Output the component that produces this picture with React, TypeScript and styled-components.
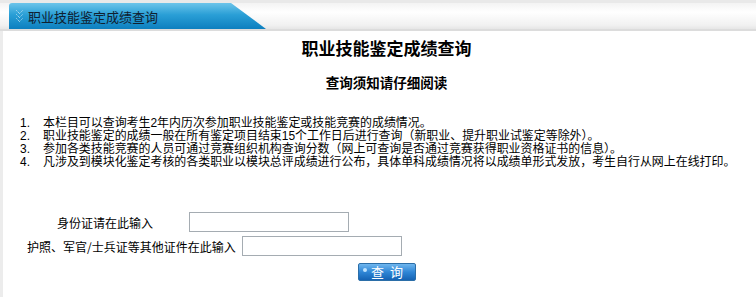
import React from 'react';
import styled, { createGlobalStyle } from 'styled-components';

const GlobalStyle = createGlobalStyle`
  html, body {
    margin: 0;
    padding: 0;
    background: #fff;
    font-family: "Liberation Sans", "Noto Sans CJK SC", sans-serif;
    font-size: 12px;
    color: #000;
  }
`;

const Page = styled.div`
  width: 756px;
  height: 297px;
  overflow: hidden;
  display: flex;
  flex-direction: column;
`;

const Header = styled.div`
  height: 26px;
  border-top: 3px solid #e9e9e9;
  border-bottom: 2px solid #dcdcdc;
  background: linear-gradient(#f3f3f3, #ffffff 35%, #f1f1f1 85%, #e6e6e6);
  display: flex;
  padding-left: 9px;
`;

const Tab = styled.div`
  width: 250px;
  height: 26px;
  background: linear-gradient(#6cc4ea, #2a9fd6 45%, #0d7fbf);
  clip-path: polygon(0 0, 222px 0, 100% 100%, 0 100%);
  border-top-left-radius: 3px;
  display: flex;
  align-items: center;
  gap: 5px;
  padding-left: 7px;
  font-family: "Noto Sans CJK SC", sans-serif;
  font-size: 13px;
  color: #102030;
`;

const Body = styled.div`
  flex: 1;
  border-left: 3px solid #ececec;
  display: flex;
  flex-direction: column;
`;

const Title = styled.h1`
  margin: 6px 0 0;
  text-align: center;
  padding-left: 14px;
  font-family: "Noto Sans CJK SC", sans-serif;
  font-size: 17px;
  font-weight: bold;
  line-height: 22px;
`;

const SubTitle = styled.h2`
  margin: 14px 0 0;
  text-align: center;
  padding-left: 14px;
  font-family: "Noto Sans CJK SC", sans-serif;
  font-size: 13.5px;
  font-weight: bold;
  line-height: 18px;
`;

const Notes = styled.ol`
  margin: 26px 0 0;
  padding: 0 0 0 17px;
  list-style: none;
`;

const Note = styled.li`
  display: flex;
  line-height: 13px;
  height: 13px;
  font-family: "Liberation Sans", "Noto Sans CJK SC", sans-serif;
  font-size: 11.95px;
  white-space: nowrap;
`;

const Num = styled.span`
  width: 23px;
  flex: none;
`;

const Form = styled.form`
  margin-top: 41px;
  display: flex;
  flex-direction: column;
`;

const Row = styled.div<{ $indent: number; $gap: number }>`
  display: flex;
  align-items: center;
  height: 24px;
  padding-left: ${p => p.$indent}px;
  gap: ${p => p.$gap}px;
  font-family: "Noto Sans CJK SC", sans-serif;
  font-size: 12px;
`;

const Input = styled.input`
  box-sizing: border-box;
  width: 160px;
  height: 20px;
  margin: 0;
  border: 1px solid #a5acb2;
  background: #fff;
`;

const Submit = styled.button`
  margin: 5px 0 0 355px;
  width: 58px;
  height: 18px;
  padding: 0 0 0 6px;
  border: 1px solid #2b6ea8;
  border-radius: 2px;
  background: linear-gradient(#6fb6ee, #2f86d6 50%, #1563b4);
  color: #fff;
  font-family: "Noto Sans CJK SC", sans-serif;
  font-size: 13px;
  letter-spacing: 6px;
  line-height: 16px;
  position: relative;
  &::before {
    content: "";
    position: absolute;
    left: 4px;
    top: 4px;
    width: 4px;
    height: 4px;
    border-radius: 50%;
    background: #bfe3ff;
  }
`;

const Chevrons = () => (
  <svg width="7" height="14" viewBox="0 0 7 14">
    <g fill="none" stroke="#e6f4fb" strokeWidth="1" strokeDasharray="1 1">
      <polyline points="0.5,1.5 3.5,4.5 6.5,1.5" />
      <polyline points="0.5,5.5 3.5,8.5 6.5,5.5" />
      <polyline points="0.5,9.5 3.5,12.5 6.5,9.5" />
    </g>
  </svg>
);

const notes = [
  '本栏目可以查询考生2年内历次参加职业技能鉴定或技能竞赛的成绩情况。',
  '职业技能鉴定的成绩一般在所有鉴定项目结束15个工作日后进行查询（新职业、提升职业试鉴定等除外）。',
  '参加各类技能竞赛的人员可通过竞赛组织机构查询分数（网上可查询是否通过竞赛获得职业资格证书的信息）。',
  '凡涉及到模块化鉴定考核的各类职业以模块总评成绩进行公布，具体单科成绩情况将以成绩单形式发放，考生自行从网上在线打印。',
];

const App: React.FC = () => {
  return (
    <>
      <GlobalStyle />
      <Page>
        <Header>
          <Tab>
            <Chevrons />
            职业技能鉴定成绩查询
          </Tab>
        </Header>
        <Body>
          <Title>职业技能鉴定成绩查询</Title>
          <SubTitle>查询须知请仔细阅读</SubTitle>
          <Notes>
            {notes.map((n, i) => (
              <Note key={i}>
                <Num>{i + 1}.</Num>
                {n}
              </Note>
            ))}
          </Notes>
          <Form onSubmit={e => e.preventDefault()}>
            <Row $indent={54} $gap={36}>
              身份证请在此输入
              <Input type="text" />
            </Row>
            <Row $indent={24} $gap={6}>
              护照、军官/士兵证等其他证件在此输入
              <Input type="text" />
            </Row>
            <Submit type="submit">查询</Submit>
          </Form>
        </Body>
      </Page>
    </>
  );
};

export default App;
